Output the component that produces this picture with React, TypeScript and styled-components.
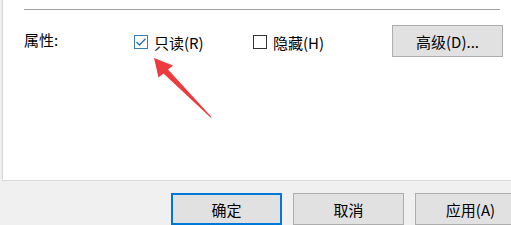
import styled, { createGlobalStyle } from "styled-components";

const GlobalStyle = createGlobalStyle`
  html, body {
    margin: 0;
    padding: 0;
    background: #f0f0f0;
  }
  body {
    font-family: "Noto Sans CJK SC", "Noto Sans", sans-serif;
    color: #000;
  }
`;

const Dialog = styled.div`
  position: relative;
  width: 511px;
  height: 225px;
  overflow: hidden;
  background: #f0f0f0;
`;

const Panel = styled.div`
  margin-left: 2px;
  width: 540px;
  height: 181px;
  box-sizing: border-box;
  background: #fff;
  border-left: 1px solid #d9d9d9;
  border-bottom: 1px solid #d9d9d9;
  padding: 9px 0 0 21px;
`;

const Separator = styled.div`
  width: 476px;
  height: 1px;
  background: #a0a0a0;
`;

const AttrRow = styled.div`
  display: flex;
  align-items: center;
  height: 32px;
  margin-top: 15px;
  font-size: 15px;
`;

const Label = styled.span`
  width: 110px;
  margin-top: -3px;
`;

const CheckItem = styled.label<{ $width: number }>`
  display: flex;
  align-items: center;
  gap: 6px;
  width: ${(p) => p.$width}px;
  margin-top: 2px;
`;

const Box = styled.span<{ $checked?: boolean }>`
  display: flex;
  align-items: center;
  justify-content: center;
  width: 14px;
  height: 14px;
  box-sizing: border-box;
  border: 1px solid ${(p) => (p.$checked ? "#3a7fb4" : "#333")};
  background: #fff;
`;

const Button = styled.div<{ $default?: boolean }>`
  display: flex;
  align-items: center;
  justify-content: center;
  width: 111px;
  height: 32px;
  box-sizing: border-box;
  flex: none;
  background: #e1e1e1;
  border: ${(p) => (p.$default ? "2px solid #0078d7" : "1px solid #adadad")};
  font-size: 15px;
`;

const Footer = styled.div`
  display: flex;
  gap: 11px;
  padding: 12px 0 0 171px;
`;

const Arrow = styled.svg`
  position: absolute;
  left: 150px;
  top: 55px;
`;

const Check = () => (
  <svg width="12" height="12" viewBox="0 0 12 12">
    <path d="M1.5 6 L4.5 9 L10.5 2.8" fill="none" stroke="#2f6fa8" strokeWidth="1.3" />
  </svg>
);

export default function App() {
  return (
    <>
      <GlobalStyle />
      <Dialog>
        <Panel>
          <Separator />
          <AttrRow>
            <Label>属性:</Label>
            <CheckItem $width={119}>
              <Box $checked>
                <Check />
              </Box>
              只读(R)
            </CheckItem>
            <CheckItem $width={139}>
              <Box />
              隐藏(H)
            </CheckItem>
            <Button>高级(D)...</Button>
          </AttrRow>
        </Panel>
        <Footer>
          <Button $default>确定</Button>
          <Button>取消</Button>
          <Button>应用(A)</Button>
        </Footer>
        <Arrow width="70" height="70" viewBox="0 0 70 70">
          <path
            d="M4 3 L23 10.5 L18 14.5 L61.5 62 L60.5 62.5 L13.5 18.5 L8.5 22.5 Z"
            fill="#ec3a3f"
          />
        </Arrow>
      </Dialog>
    </>
  );
}
